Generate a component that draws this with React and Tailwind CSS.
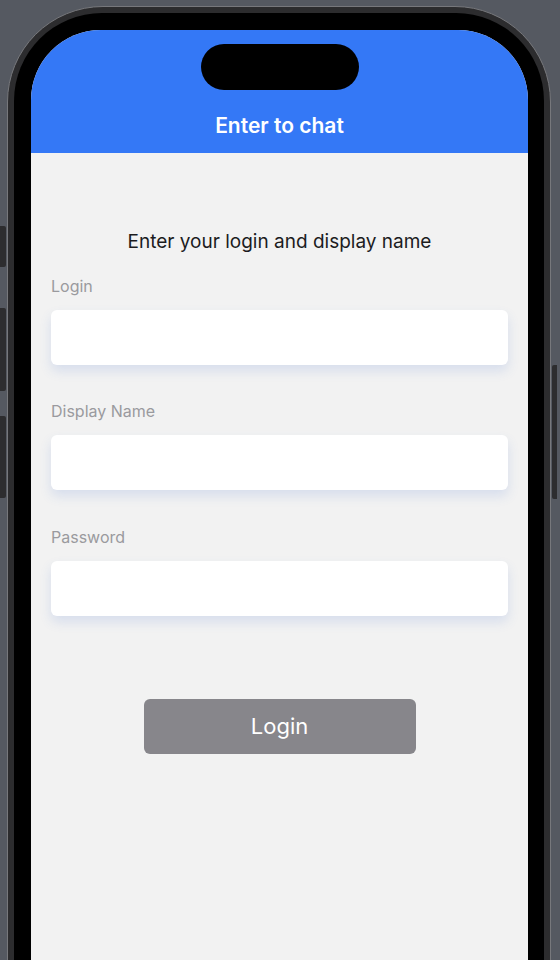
import React from "react";

function Field({ label, className = "" }) {
  return (
    <div className={className}>
      <div className="h-[20px] text-[16px] leading-[20px] text-[#9a9a9e]">{label}</div>
      <div className="mt-[14px] h-[55px] rounded-[6px] bg-white shadow-[0_6px_12px_rgba(60,110,210,0.15)]" />
    </div>
  );
}

export default function App() {
  return (
    <div
      className="relative w-[560px] h-[960px] overflow-hidden bg-[#555961] pt-[6px] pl-[7px] pr-[9px]"
      style={{ fontFamily: "Inter, 'Noto Sans', sans-serif" }}
    >
      {/* side buttons */}
      <div className="absolute left-0 top-[226px] w-[6px] h-[41px] rounded-r-[2px] bg-[#2d2d2f]" />
      <div className="absolute left-0 top-[308px] w-[6px] h-[83px] rounded-r-[2px] bg-[#2d2d2f]" />
      <div className="absolute left-0 top-[416px] w-[6px] h-[82px] rounded-r-[2px] bg-[#2d2d2f]" />
      <div className="absolute left-[552px] top-[365px] w-[5px] h-[134px] rounded-l-[2px] bg-[#2d2d2f]" />

      {/* frame */}
      <div className="h-[1000px] rounded-t-[96px] bg-[#2c2c2e] border border-[#77787c] p-[6px]">
        <div className="h-full rounded-t-[88px] bg-black pt-[17px] pl-[17px] pr-[16px]">
          <div className="h-full rounded-t-[70px] overflow-hidden bg-[#f2f2f2] flex flex-col">
            {/* header */}
            <div className="h-[123px] bg-[#3478f6] flex flex-col items-center shrink-0">
              <div className="mt-[14px] w-[158px] h-[46px] rounded-full bg-black" />
              <div className="mt-[23px] text-white text-[21px] leading-[26px] font-semibold">
                Enter to chat
              </div>
            </div>
            {/* content */}
            <div className="px-[20px] flex flex-col">
              <div className="mt-[77px] text-center text-[19px] leading-[24px] text-[#1c1c1e]">
                Enter your login and display name
              </div>
              <Field label="Login" className="mt-[22px]" />
              <Field label="Display Name" className="mt-[36px]" />
              <Field label="Password" className="mt-[37px]" />
              <div className="mt-[83px] flex justify-center">
                <button className="w-[272px] h-[55px] rounded-[6px] bg-[#87868b] text-white text-[22px]">
                  Login
                </button>
              </div>
            </div>
          </div>
        </div>
      </div>
    </div>
  );
}
